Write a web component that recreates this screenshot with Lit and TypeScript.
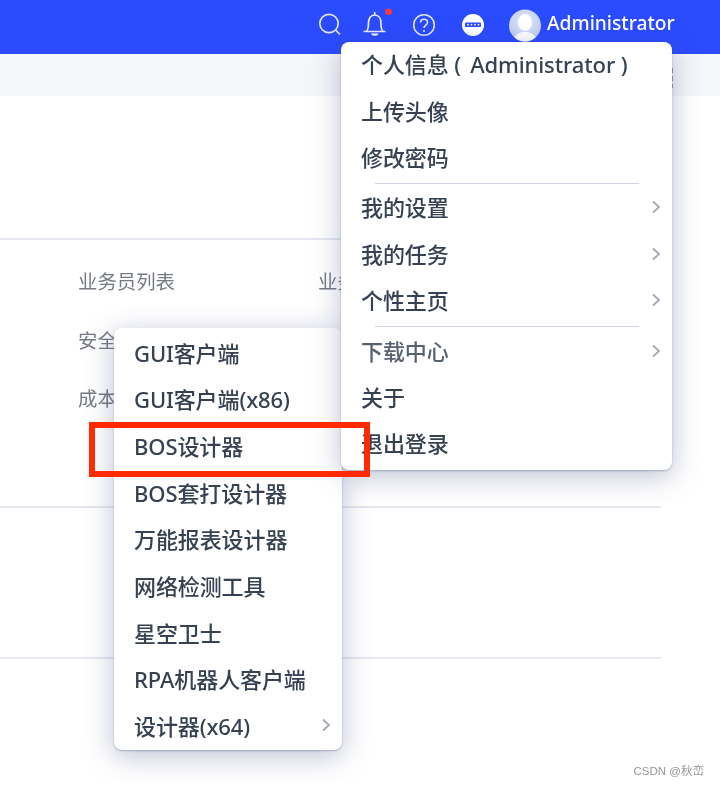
import { LitElement, html, css, svg } from "lit";
import { customElement } from "lit/decorators.js";

const chevron = html`<svg class="chev" width="10" height="16" viewBox="0 0 10 16"><path d="M2 2.5 8 8l-6 5.5" fill="none" stroke="#a3a8b4" stroke-width="1.8"/></svg>`;

type Row = { t: string; more?: boolean; dim?: boolean } | "div";
const rightMenu: Row[] = [
  { t: "个人信息 (\u00a0\u2009Administrator\u00a0)" }, { t: "上传头像" }, { t: "修改密码" }, "div",
  { t: "我的设置", more: true }, { t: "我的任务", more: true }, { t: "个性主页", more: true }, "div",
  { t: "下载中心", more: true, dim: true }, { t: "关于" }, { t: "退出登录" },
];
const leftMenu: Row[] = [
  { t: "GUI客户端" }, { t: "GUI客户端(x86)" }, { t: "BOS设计器" }, { t: "BOS套打设计器" }, { t: "万能报表设计器" },
  { t: "网络检测工具" }, { t: "星空卫士" }, { t: "RPA机器人客户端" }, { t: "设计器(x64)", more: true },
];

@customElement("app-root")
export class AppRoot extends LitElement {
  static styles = css`
    :host { display: block; position: relative; width: 720px; height: 785px; overflow: hidden; background: #fff;
      font-family: "Noto Sans", "Noto Sans CJK SC", sans-serif; }
    .soft { filter: blur(0.45px); height: 100%; position: relative; }
    header { height: 54px; background: #2b4bff; display: flex; align-items: center; justify-content: flex-end; padding: 0 46px 4px 0; box-sizing: border-box; }
    .icons { display: flex; align-items: center; }
    .icons svg { display: block; overflow: visible; }
    .m21 { margin-right: 21px; }
    .m26 { margin-right: 26px; }
    .m25 { margin-right: 25px; }
    .user { font-size: 19.2px; font-weight: 500; color: #fff; margin-left: 6px; line-height: 1; position: relative; top: -2px; width: 127px; white-space: nowrap; }
    .band { height: 42px; background: #f5f6fa; position: relative; }
    .dots { position: absolute; left: 671px; top: 14px; width: 2px; height: 20px; background: repeating-linear-gradient(#9aa0ad 0 5px, transparent 5px 8px); }
    main { padding-top: 142px; width: 661px; }
    section { border-top: 2px solid #e6e7f1; }
    .s1 { height: 268px; box-sizing: border-box; padding: 26px 0 0 78px; display: grid; grid-template-columns: 240px 1fr; grid-auto-rows: 58.5px; font-size: 19.4px; color: #767a83; white-space: nowrap; }
    .s2 { height: 149px; }
    .s3 { height: 100px; }
    .menu { position: absolute; background: #fff; border-radius: 8px; box-shadow: 0 1px 2px rgba(70,80,120,.35), 0 6px 28px rgba(60,70,130,.34); box-sizing: border-box; color: #364152; font-size: 22px; font-weight: 500; letter-spacing: -0.1px; }
    .right { left: 341px; top: 42px; width: 331px; height: 428px; z-index: 2; }
    .left { left: 114px; top: 328px; width: 228px; height: 422px; z-index: 1; }
    .row { height: 46.67px; box-sizing: border-box; display: flex; align-items: center; justify-content: space-between; padding: 1px 11px 0 20px; white-space: nowrap; }
    .right .row { height: 46.4px; padding-top: 0; padding-bottom: 4px; }
    .right .chev { margin-top: 2px; }
    .dim { color: #566172; }
    .menu hr { height: 1px; border: 0; margin: 2px 33px 1px 34px; background: #d2d4e6; }
    .chev { display: block; }
    .mark { position: absolute; left: 89px; top: 422px; width: 281px; height: 55px; box-sizing: border-box; border: 6px solid #ff2a00; z-index: 3; }
    .csdn { position: absolute; right: 16px; top: 762px; font: 11.5px "Liberation Sans", "Noto Sans CJK SC", sans-serif; color: #969696; z-index: 3; }
  `;

  private rows(items: Row[]) {
    return items.map((r) => r === "div" ? html`<hr />` :
      html`<div class="row ${r.dim ? "dim" : ""}"><span>${r.t}</span>${r.more ? chevron : ""}</div>`);
  }

  render() {
    return html`<div class="soft">
      <header>
        <div class="icons">
          <svg class="m21" width="24" height="24" viewBox="0 0 24 24" fill="none" stroke="#e3e8ff" stroke-width="1.7"><circle cx="13" cy="10.500" r="9.200"/><path d="m19.500 17 4.500 4.500"/></svg>
          <svg class="m21" width="30" height="30" viewBox="0 0 30 30" fill="none" stroke="#e9ecff" stroke-width="1.7"><path d="M2.500 21.500h22M5.500 21.500c1.800-2.200 2-5 2-8.500 0-4.500 2.300-8 6.200-8s6.200 3.500 6.200 8c0 3.500.2 6.300 2 8.500"/><path d="M13.700 2v3"/><path d="M10 23.500h7.500c-.8 3-6.700 3-7.500 0Z" fill="#fff" stroke="none"/><circle cx="27.500" cy="1.800" r="3.300" fill="#ff3b3b" stroke="none"/></svg>
          <svg class="m26" width="24" height="24" viewBox="0 0 24 24" fill="none" stroke="#dfe5ff" stroke-width="1.6"><circle cx="12" cy="12" r="10.300"/><path d="M8.500 9.500c0-2 1.600-3.300 3.500-3.300s3.500 1.300 3.500 3.200c0 2.800-3.500 2.600-3.500 5.600"/><circle cx="12" cy="18" r="1" fill="#dfe5ff" stroke="none"/></svg>
          <svg class="m25" width="22" height="22" viewBox="0 0 22 22"><circle cx="11" cy="11" r="11" fill="#fff"/><rect x="3" y="8.500" width="16" height="4.500" rx="1" fill="#2b4bff"/>${[6, 9.500, 13, 16.500].map((x) => svg`<circle cx=${x} cy="10.700" r="0.9" fill="#fff"/>`)}</svg>
          <svg width="32" height="33" viewBox="0 0 32 33"><defs><clipPath id="c"><circle cx="16" cy="16.500" r="16"/></clipPath><radialGradient id="g" cx="50%" cy="40%" r="60%"><stop offset="0" stop-color="#e6ecfb"/><stop offset="1" stop-color="#bccbf1"/></radialGradient></defs><circle cx="16" cy="16.500" r="16" fill="url(#g)"/><g clip-path="url(#c)" fill="#fff"><ellipse cx="16" cy="13.500" rx="7" ry="8.500"/><path d="M3 33c1-6 7-9 10-10h6c3 1 9 4 10 10Z"/></g></svg>
          <span class="user">Administrator</span>
        </div>
      </header>
      <div class="band"><span class="dots"></span></div>
      <main>
        <section class="s1"><span>业务员列表</span><span>业务</span><span>安全</span><span></span><span>成本</span></section>
        <section class="s2"></section>
        <section class="s3"></section>
      </main>
      <div class="menu left">${this.rows(leftMenu)}</div>
      <div class="menu right">${this.rows(rightMenu)}</div>
      <div class="mark"></div>
      <div class="csdn">CSDN @秋峦</div>
    </div>`;
  }
}
